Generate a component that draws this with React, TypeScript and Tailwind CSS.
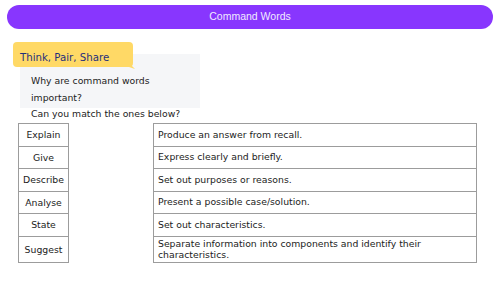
const rows = [
  { word: 'Explain', meaning: ['Produce an answer from recall.'], h: 'h-[23px]' },
  { word: 'Give', meaning: ['Express clearly and briefly.'], h: 'h-[22px]' },
  { word: 'Describe', meaning: ['Set out purposes or reasons.'], h: 'h-[23px]' },
  { word: 'Analyse', meaning: ['Present a possible case/solution.'], h: 'h-[22px]' },
  { word: 'State', meaning: ['Set out characteristics.'], h: 'h-[23px]' },
  {
    word: 'Suggest',
    meaning: ['Separate information into components and identify their', 'characteristics.'],
    h: 'h-[26px]',
  },
];

const body = "font-['DejaVu_Sans',sans-serif] text-[9.3px] text-[#222]";

export default function App() {
  return (
    <div className="w-[500px] h-[281px] bg-white overflow-hidden">
      {/* title pill */}
      <div className="mx-[7px] mt-[5px] h-[24px] rounded-full bg-[#8836fe] flex items-center justify-center">
        <span className="font-['Liberation_Sans',Arial,sans-serif] text-[10.5px] text-[#f1eaff]">
          Command Words
        </span>
      </div>

      {/* prompt tag + question box */}
      <div className="relative z-10 ml-[13px] mt-[13px] w-[120px] h-[25px] rounded-[4px] bg-[#ffd966] pl-[7px] pt-[9px]">
        <span className="block font-['DejaVu_Sans',sans-serif] text-[10.2px] leading-[14px] text-[#1f2f7c]">
          Think, Pair, Share
        </span>
        <svg className="absolute right-[-2px] bottom-[-2px]" width="6" height="6" viewBox="0 0 6 6">
          <path d="M0 0 L6 6 L0 4 Z" fill="#ffd966" />
        </svg>
      </div>
      <div className={`ml-[20px] -mt-[13px] w-[180px] h-[54px] bg-[#f5f6f8] pl-[11px] pt-[19px] leading-[16.5px] ${body}`}>
        <p>Why are command words</p>
        <p>important?</p>
        <p>Can you match the ones below?</p>
      </div>

      {/* matching tables */}
      <div className="mt-[15px] ml-[18px] flex gap-[84px]">
        <div className="w-[51px] border-b border-[#9c9c9c]">
          {rows.map((r) => (
            <div
              key={r.word}
              className={`${r.h} border-t border-x border-[#9c9c9c] flex items-center justify-center ${body}`}
            >
              {r.word}
            </div>
          ))}
        </div>
        <div className="w-[324px] border-b border-[#9c9c9c]">
          {rows.map((r) => (
            <div
              key={r.word}
              className={`${r.h} border-t border-x border-[#9c9c9c] flex flex-col justify-center pl-[4px] leading-[10.7px] ${body}`}
            >
              {r.meaning.map((m) => (
                <span key={m}>{m}</span>
              ))}
            </div>
          ))}
        </div>
      </div>
    </div>
  );
}
